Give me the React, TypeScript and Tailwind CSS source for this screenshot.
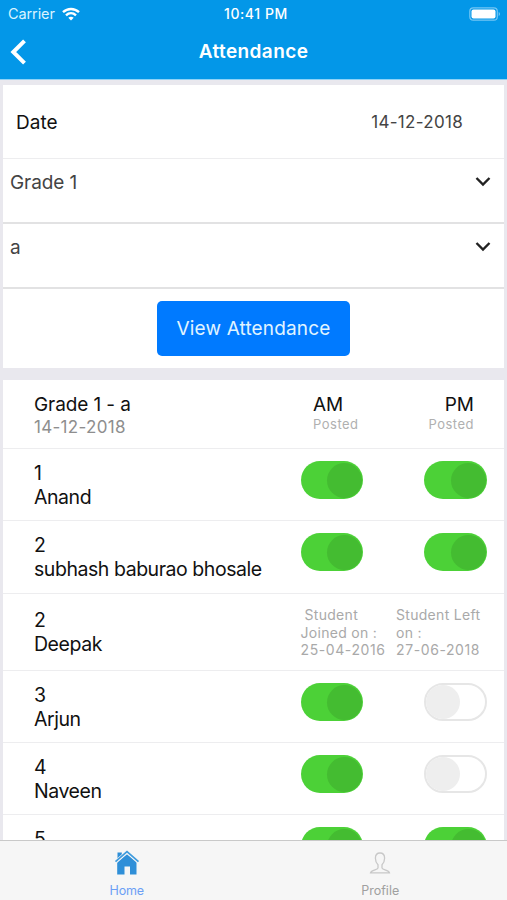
import { useState } from "react";

type Student = {
  roll: number;
  name?: string;
  am?: boolean;
  pm?: boolean;
  joined?: string;
  left?: string;
  height: string;
};

const students: Student[] = [
  { roll: 1, name: "Anand", am: true, pm: true, height: "h-[72px]" },
  { roll: 2, name: "subhash baburao bhosale", am: true, pm: true, height: "h-[73px]" },
  { roll: 2, name: "Deepak", joined: "25-04-2016", left: "27-06-2018", height: "h-[77px]" },
  { roll: 3, name: "Arjun", am: true, pm: false, height: "h-[72px]" },
  { roll: 4, name: "Naveen", am: true, pm: false, height: "h-[72px]" },
  { roll: 5, am: true, pm: true, height: "h-[72px]" },
];

function Toggle({ initial = false }: { initial?: boolean }) {
  const [on, setOn] = useState(initial);

  return (
    <button
      type="button"
      role="switch"
      aria-checked={on}
      onClick={() => setOn(!on)}
      className={
        on
          ? "flex h-[38px] w-[62.500px] items-center justify-end rounded-full bg-[#4cd137] pr-px"
          : "flex h-[38px] w-[62.500px] items-center justify-start rounded-full border-2 border-[#e6e6e6] bg-white"
      }
    >
      <span
        className={
          on
            ? "size-[35px] rounded-full bg-[#44bc31]"
            : "size-[34px] rounded-full bg-[#eeeeee]"
        }
      />
    </button>
  );
}

function SelectRow({ value }: { value: string }) {
  return (
    <div className="flex h-[65px] items-start justify-between border-b-2 border-[#e2e2e3] pt-[11px] pr-[13px] pl-[7px]">
      <span className="pt-px text-[19px] leading-6 tracking-[-0.1px] text-[#444]">{value}</span>
      <svg width="16" height="24" viewBox="0 0 16 24" fill="none" stroke="#222" strokeWidth="2.4">
        <path d="M1.500 8 8 14.500l6.500-6.500" />
      </svg>
    </div>
  );
}

function StudentRow({ student }: { student: Student }) {
  const hasLeft = Boolean(student.left);

  return (
    <div
      className={`${student.height} grid grid-cols-[266.500px_1fr] border-b border-[#ededef] pl-[31px] ${
        hasLeft ? "pt-3.5" : "pt-3"
      }`}
    >
      <div className="text-[19.500px] leading-6 tracking-[-0.45px] text-[#111]">
        <p>{student.roll}</p>
        {student.name && <p>{student.name}</p>}
      </div>
      {hasLeft ? (
        <div className="-mt-0.5 flex gap-[8.500px] text-[14px] leading-[17.500px] tracking-[0.3px] text-[#a9a9a9]">
          <p className="w-[87px] whitespace-nowrap">
            <span className="pl-1">Student</span>
            <br />
            Joined on :
            <br />
            <span className="tracking-[0.6px]">{student.joined}</span>
          </p>
          <p className="whitespace-nowrap">
            Student Left
            <br />
            on :
            <br />
            <span className="tracking-[0.6px]">{student.left}</span>
          </p>
        </div>
      ) : (
        <div className="flex items-start gap-[61px]">
          <Toggle initial={student.am} />
          <Toggle initial={student.pm} />
        </div>
      )}
    </div>
  );
}

export default function App() {
  return (
    <div className="flex h-[900px] w-[507px] flex-col overflow-hidden bg-[#e9e8ee] font-['Inter','Liberation_Sans',sans-serif]">
      {/* Header */}
      <header className="h-20 shrink-0 border-b border-[#8fd3f7] bg-[#0397e8] text-white">
        <div className="grid h-[27px] grid-cols-3 items-center pr-[6px] pl-2">
          <div className="flex items-center gap-[7px] text-[14.500px] text-[#d9f3ff]">
            <span className="tracking-[-0.1px]">Carrier</span>
            <svg width="18" height="14" viewBox="0 0 18 14" fill="none" stroke="white" strokeWidth="2.4">
              <path d="M1 5.200c4.600-4.300 11.400-4.300 16 0" />
              <path d="M4 8.300c2.900-2.700 7.100-2.700 10 0" />
              <path d="M6.300 10.700c1.600-1.400 3.800-1.400 5.400 0L9 13.400z" fill="white" stroke="none" />
            </svg>
          </div>
          <span className="pl-[3px] text-center text-[14px] font-medium tracking-[0.6px]">10:41 PM</span>
          <div className="flex justify-end">
            <svg width="32" height="14" viewBox="0 0 32 14">
              <rect x="0.800" y="0.800" width="27.500" height="12.400" rx="3.500" fill="none" stroke="#74c6f4" strokeWidth="1.200" />
              <rect x="2.500" y="2.500" width="24" height="9" rx="2" fill="white" />
              <path d="M29.700 5v4c1.800-.6 1.800-3.400 0-4z" fill="#74c6f4" />
            </svg>
          </div>
        </div>
        <div className="grid h-[50px] grid-cols-[60px_1fr_60px] items-center">
          <button type="button" aria-label="Back" className="pl-[10px]">
            <svg width="18" height="28" viewBox="0 0 18 28" fill="none" stroke="white" strokeWidth="4">
              <path d="M14.500 2.800 3.300 14l11.200 11.200" />
            </svg>
          </button>
          <h1 className="text-center text-[19px] font-semibold tracking-[0.4px]">Attendance</h1>
        </div>
      </header>

      <main className="min-h-0 flex-1 overflow-hidden px-[3px] pt-[5px]">
        {/* Filters */}
        <section className="mb-3 h-[283px] bg-white">
          <div className="flex h-[74px] items-center justify-between border-b border-[#ededef] pr-[41px] pl-[13px]">
            <span className="pt-[3px] text-[19px] text-[#111]">Date</span>
            <span className="pt-[2px] text-[17px] tracking-[0.3px] text-[#444]">14-12-2018</span>
          </div>
          <SelectRow value="Grade 1" />
          <SelectRow value="a" />
          <div className="flex justify-center pt-3">
            <button
              type="button"
              className="h-[55px] w-[193px] rounded-[5px] bg-[#007aff] pt-[2px] text-[19px] tracking-[0.15px] text-[#e0f4ff]"
            >
              View Attendance
            </button>
          </div>
        </section>

        {/* Attendance list */}
        <section className="bg-white">
          <div className="flex h-[69px] border-b border-[#ededef] pt-[13px] pr-[30px] pl-[31px] text-[#111]">
            <div className="w-[279px]">
              <p className="text-[19px] leading-6 tracking-[-0.1px]">Grade 1 - a</p>
              <p className="text-[17px] leading-5 tracking-[0.3px] text-[#8e8e8e]">14-12-2018</p>
            </div>
            <div>
              <p className="text-[19px] leading-6">AM</p>
              <p className="text-[13px] leading-[15px] tracking-[0.5px] text-[#b0b0b0]">Posted</p>
            </div>
            <div className="ml-auto text-right">
              <p className="text-[19px] leading-6">PM</p>
              <p className="text-[13px] leading-[15px] tracking-[0.5px] text-[#b0b0b0]">Posted</p>
            </div>
          </div>
          {students.map((student, i) => (
            <StudentRow key={i} student={student} />
          ))}
        </section>
      </main>

      {/* Tab bar */}
      <nav className="grid h-[60px] shrink-0 grid-cols-2 border-t border-[#c9c9c9] bg-[#f6f6f6] text-[12.500px]">
        <button type="button" className="flex flex-col items-center pt-[9px] text-[#6c9ff5]">
          <svg width="26" height="26" viewBox="0 0 26 26">
            <path d="M3.500 2.500h4.300v3.800l-4.300 4z" fill="#2f8fd8" />
            <path d="M3.200 11.800 13 4l9.500 7.800V24.500h-6.500v-8h-5.500v8H3.200z" fill="#2f8fd8" />
            <path d="M1.500 12 13 2l11.500 10" fill="none" stroke="#f6f6f6" strokeWidth="3.400" />
            <path d="M1.500 11.600 13 1.600l11.500 10" fill="none" stroke="#3f9bdd" strokeWidth="1.700" />
          </svg>
          <span className="mt-[6px] tracking-[-0.1px]">Home</span>
        </button>
        <button type="button" className="flex flex-col items-center pt-[9px] text-[#a0a0a0]">
          <svg width="24" height="26" viewBox="0 0 24 26" fill="none" stroke="#c8c8c8" strokeWidth="1.300">
            <path d="M12 3c-3.200 0-4.600 2.300-4.600 5.300 0 3 1.100 5 2.600 6.400v3.400c0 2-6.800 1.700-7.500 4.700h19c-.7-3-7.500-2.700-7.500-4.700v-3.400c1.500-1.400 2.600-3.400 2.600-6.400C16.600 5.300 15.200 3 12 3z" />
          </svg>
          <span className="mt-[6px]">Profile</span>
        </button>
      </nav>
    </div>
  );
}
